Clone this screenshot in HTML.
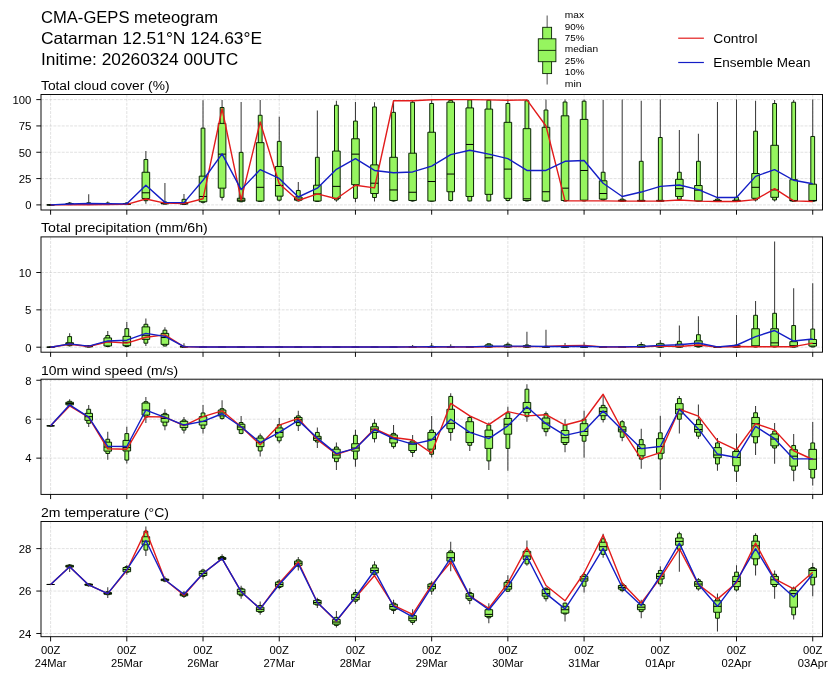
<!DOCTYPE html>
<html lang="en">
<head>
<meta charset="utf-8">
<title>CMA-GEPS meteogram</title>
<style>
html,body{margin:0;padding:0;background:#fff;}
body{width:840px;height:680px;overflow:hidden;font-family:"Liberation Sans",sans-serif;}
svg{display:block;will-change:transform;}
</style>
</head>
<body>
<svg width="840" height="680" viewBox="0 0 840 680" font-family="Liberation Sans, sans-serif">
<defs><clipPath id="c0"><rect x="41" y="94.5" width="781.5" height="115.5"/></clipPath><clipPath id="c1"><rect x="41" y="236.9" width="781.5" height="115.3"/></clipPath><clipPath id="c2"><rect x="41" y="379.2" width="781.5" height="115.2"/></clipPath><clipPath id="c3"><rect x="41" y="521.5" width="781.5" height="115.2"/></clipPath></defs>
<rect width="840" height="680" fill="#fff"/>
<text x="41" y="22.7" font-size="15.87" textLength="177" lengthAdjust="spacingAndGlyphs" fill="#000">CMA-GEPS meteogram</text>
<text x="41" y="43.6" font-size="15.87" textLength="221.12" lengthAdjust="spacingAndGlyphs" fill="#000">Catarman 12.51°N 124.63°E</text>
<text x="41" y="65" font-size="15.87" textLength="197.38" lengthAdjust="spacingAndGlyphs" fill="#000">Initime: 20260324 00UTC</text>
<line x1="547.15" y1="15.6" x2="547.15" y2="84.5" stroke="#606060" stroke-width="1.1"/>
<rect x="542.7" y="27.3" width="8.9" height="46.3" fill="#96f55f" stroke="#0a2405" stroke-width="0.9"/>
<rect x="538.3" y="38.8" width="17.6" height="22.9" fill="#96f55f" stroke="#0a2405" stroke-width="0.9"/>
<line x1="538.3" y1="50.4" x2="555.9" y2="50.4" stroke="#0a2405" stroke-width="0.9"/>
<text x="564.8" y="18.2" font-size="9.07" textLength="19.25" lengthAdjust="spacingAndGlyphs" fill="#000">max</text>
<text x="564.8" y="29.62" font-size="9.07" textLength="19.75" lengthAdjust="spacingAndGlyphs" fill="#000">90%</text>
<text x="564.8" y="41.04" font-size="9.07" textLength="19.75" lengthAdjust="spacingAndGlyphs" fill="#000">75%</text>
<text x="564.8" y="52.46" font-size="9.07" textLength="33.25" lengthAdjust="spacingAndGlyphs" fill="#000">median</text>
<text x="564.8" y="63.88" font-size="9.07" textLength="19.75" lengthAdjust="spacingAndGlyphs" fill="#000">25%</text>
<text x="564.8" y="75.3" font-size="9.07" textLength="19.75" lengthAdjust="spacingAndGlyphs" fill="#000">10%</text>
<text x="564.8" y="86.72" font-size="9.07" textLength="16.75" lengthAdjust="spacingAndGlyphs" fill="#000">min</text>
<line x1="678.2" y1="38.2" x2="703.9" y2="38.2" stroke="#e21c1c" stroke-width="1.2"/>
<line x1="678.2" y1="62.5" x2="703.9" y2="62.5" stroke="#141ec6" stroke-width="1.2"/>
<text x="713.2" y="42.8" font-size="12.47" textLength="44.38" lengthAdjust="spacingAndGlyphs" fill="#000">Control</text>
<text x="713.2" y="67.2" font-size="12.47" textLength="97.38" lengthAdjust="spacingAndGlyphs" fill="#000">Ensemble Mean</text>
<path d="M50.6 94.5V210M126.81 94.5V210M203.02 94.5V210M279.24 94.5V210M355.45 94.5V210M431.66 94.5V210M507.87 94.5V210M584.08 94.5V210M660.3 94.5V210M736.51 94.5V210M812.72 94.5V210M41 204.9H822.5M41 178.58H822.5M41 152.25H822.5M41 125.93H822.5M41 99.6H822.5" stroke="#c8c8c8" stroke-width="0.55" stroke-dasharray="2.9 1.25" fill="none"/>
<g clip-path="url(#c0)">
<path d="M69.65 201.95V204.69M88.71 194.26V204.69M107.76 201.53V204.69M126.81 202.27V204.69M145.87 150.88V203.85M164.92 182.89V204.37M183.97 194.05V204.58M203.02 100.13V203.53M222.08 99.92V200.48M241.13 102.02V202.27M260.18 99.92V201.74M279.24 116.66V201.43M298.29 182.05V201.43M317.34 110.55V201.74M336.4 100.76V201.74M355.45 102.02V202.27M374.5 102.23V201.43M393.55 100.76V201.43M412.61 99.92V201.43M431.66 99.6V201.43M450.71 99.6V201.43M469.77 99.6V201.43M488.82 99.6V201.43M507.87 99.6V201.43M526.93 99.6V201.43M545.98 99.6V201.43M565.03 99.6V201.43M584.08 99.6V201.43M603.14 99.92V201M622.19 99.6V201.43M641.24 100.76V201.43M660.3 99.6V201.43M679.35 129.93V200.48M698.4 133.82V201.43M717.46 102.02V201.43M736.51 99.6V201.43M755.56 100.76V201.43M774.61 99.92V201.43M793.67 99.92V201.43M812.72 99.6V201.43" stroke="#3c3c3c" stroke-width="1.05" fill="none"/>
<path d="M48.7 204.9H52.5V204.9H48.7ZM67.75 203H71.55V204.58H67.75ZM86.81 202.79H90.61V204.58H86.81ZM105.86 203H109.66V204.58H105.86ZM124.91 203H128.71V204.58H124.91ZM143.97 159.52H147.77V200.69H143.97ZM163.02 201.95H166.82V204.06H163.02ZM182.07 199.32H185.87V204.37H182.07ZM201.12 128.14H204.92V202.27H201.12ZM220.18 107.5H223.98V197.32H220.18ZM239.23 152.36H243.03V201.74H239.23ZM258.28 115.29H262.08V201.43H258.28ZM277.34 141.4H281.14V200.16H277.34ZM296.39 190.47H300.19V200.9H296.39ZM315.44 157.3H319.24V201.43H315.44ZM334.5 105.29H338.3V199.95H334.5ZM353.55 121.08H357.35V198.37H353.55ZM372.6 106.97H376.4V197.53H372.6ZM391.65 112.34H395.45V201H391.65ZM410.71 102.23H414.51V201H410.71ZM429.76 103.5H433.56V201.21H429.76ZM448.81 100.44H452.61V200.48H448.81ZM467.87 99.92H471.67V200.9H467.87ZM486.92 100.23H490.72V200.9H486.92ZM505.97 103.5H509.77V200.48H505.97ZM525.03 100.76H528.83V200.9H525.03ZM544.08 110.02H547.88V201.11H544.08ZM563.13 102.02H566.93V201H563.13ZM582.18 101.18H585.98V200.9H582.18ZM601.24 172.26H605.04V199.95H601.24ZM620.29 199.11H624.09V201.21H620.29ZM639.34 161.31H643.14V201.21H639.34ZM658.4 137.51H662.2V201.21H658.4ZM677.45 172.26H681.25V199.32H677.45ZM696.5 161.31H700.3V201.21H696.5ZM715.56 199.11H719.36V201.32H715.56ZM734.61 197.32H738.41V201.32H734.61ZM753.66 131.19H757.46V199.95H753.66ZM772.71 103.5H776.51V199.95H772.71ZM791.77 102.23H795.57V201.21H791.77ZM810.82 136.46H814.62V201.21H810.82Z" fill="#96f55f" stroke="#0a2405" stroke-width="1.0" stroke-linejoin="miter"/>
<path d="M46.8 204.9H54.4V204.9H46.8ZM65.85 203.64H73.45V204.37H65.85ZM84.91 203.64H92.51V204.37H84.91ZM103.96 203.64H111.56V204.37H103.96ZM123.01 203.64H130.61V204.37H123.01ZM142.06 172.26H149.67V198.48H142.06ZM161.12 202.79H168.72V203.85H161.12ZM180.17 202.79H187.77V204.06H180.17ZM199.22 176.15H206.82V201.74H199.22ZM218.28 123.4H225.88V188.16H218.28ZM237.33 198.27H244.93V201.21H237.33ZM256.38 142.67H263.98V201H256.38ZM275.44 166.47H283.04V196.16H275.44ZM294.49 197H302.09V200.16H294.49ZM313.54 185.21H321.14V201H313.54ZM332.6 151.09H340.2V198.37H332.6ZM351.65 138.77H359.25V184.68H351.65ZM370.7 164.89H378.3V193.53H370.7ZM389.75 157.3H397.35V200.48H389.75ZM408.81 153.2H416.41V200.48H408.81ZM427.86 132.24H435.46V201H427.86ZM446.91 102.23H454.51V191.74H446.91ZM465.97 107.92H473.57V196.48H465.97ZM485.02 109.08H492.62V194.37H485.02ZM504.07 122.34H511.67V198.37H504.07ZM523.13 128.66H530.73V200.48H523.13ZM542.18 127.29H549.78V200.9H542.18ZM561.23 115.82H568.83V200.48H561.23ZM580.28 119.4H587.88V200.16H580.28ZM599.34 180.79H606.94V199.11H599.34ZM618.39 200.16H625.99V201H618.39ZM637.44 200.37H645.04V201.11H637.44ZM656.5 200.37H664.1V201.11H656.5ZM675.55 179.31H683.15V196.48H675.55ZM694.6 185.52H702.2V200.9H694.6ZM713.66 200.37H721.25V201.21H713.66ZM732.71 200.16H740.31V201.21H732.71ZM751.76 173.52H759.36V198.27H751.76ZM770.81 145.3H778.41V197.32H770.81ZM789.87 179.73H797.47V200.9H789.87ZM808.92 184.16H816.52V200.9H808.92Z" fill="#96f55f" stroke="#0a2405" stroke-width="1.0" stroke-linejoin="miter"/>
<path d="M46.8 204.9H54.4M65.85 204.06H73.45M84.91 204.06H92.51M103.96 204.06H111.56M123.01 204.06H130.61M142.06 192.79H149.67M161.12 203.32H168.72M180.17 203.64H187.77M199.22 196.48H206.82M218.28 154.15H225.88M237.33 200.16H244.93M256.38 187.31H263.98M275.44 185.52H283.04M294.49 199.11H302.09M313.54 193.95H321.14M332.6 186.37H340.2M351.65 154.15H359.25M370.7 183.21H378.3M389.75 189.95H397.35M408.81 192.26H416.41M427.86 181.52H435.46M446.91 174.05H454.51M465.97 144.46H473.57M485.02 157.83H492.62M504.07 169.1H511.67M523.13 198.79H530.73M542.18 191.74H549.78M561.23 188.16H568.83M580.28 170.47H587.88M599.34 193.53H606.94M618.39 200.69H625.99M637.44 200.9H645.04M656.5 200.9H664.1M675.55 188.68H683.15M694.6 190.16H702.2M713.66 200.9H721.25M732.71 200.9H740.31M751.76 187.31H759.36M770.81 189.95H778.41M789.87 200.48H797.47M808.92 200.48H816.52" stroke="#000" stroke-width="1.0" fill="none"/>
<polyline points="50.6,204.9 69.65,204.58 88.71,204.79 107.76,204.48 126.81,204.37 145.87,199 164.92,203.11 183.97,203.64 203.02,198.79 222.08,108.76 241.13,199.95 260.18,122.03 279.24,183.73 298.29,200.48 317.34,193.84 336.4,198.79 355.45,185.21 374.5,187.84 393.55,100.76 412.61,100.76 431.66,99.81 450.71,99.6 469.77,99.6 488.82,99.92 507.87,100.23 526.93,99.92 545.98,126.03 565.03,200.9 584.08,200.9 603.14,200.9 622.19,201.11 641.24,201.11 660.3,201.11 679.35,199.95 698.4,201.11 717.46,201.43 736.51,201.43 755.56,199.64 774.61,188.68 793.67,200.9 812.72,201.43" fill="none" stroke="#e21c1c" stroke-width="1.4" stroke-linejoin="round"/>
<polyline points="50.6,204.9 69.65,203.95 88.71,203.53 107.76,203.74 126.81,203.85 145.87,185.21 164.92,202.37 183.97,202.58 203.02,180.26 222.08,153.83 241.13,189.63 260.18,169.62 279.24,178.47 298.29,197 317.34,188.16 336.4,169.31 355.45,158.67 374.5,170.47 393.55,172.78 412.61,171.94 431.66,166.15 450.71,154.67 469.77,150.25 488.82,154.15 507.87,158.67 526.93,170.47 545.98,170.47 565.03,161.31 584.08,160.46 603.14,183.21 622.19,196.48 641.24,192.05 660.3,186.37 679.35,185 698.4,189.63 717.46,197.53 736.51,197.53 755.56,176.36 774.61,169.62 793.67,180.26 812.72,183.73" fill="none" stroke="#141ec6" stroke-width="1.4" stroke-linejoin="round"/>
</g>
<rect x="41" y="94.5" width="781.5" height="115.5" fill="none" stroke="#000" stroke-width="0.95"/>
<path d="M50.6 210v4.7M126.81 210v4.7M203.02 210v4.7M279.24 210v4.7M355.45 210v4.7M431.66 210v4.7M507.87 210v4.7M584.08 210v4.7M660.3 210v4.7M736.51 210v4.7M812.72 210v4.7M41 204.9h-4.7M41 178.58h-4.7M41 152.25h-4.7M41 125.93h-4.7M41 99.6h-4.7" stroke="#000" stroke-width="0.95" fill="none"/>
<text x="31.4" y="209.2" font-size="10.2" textLength="6.25" lengthAdjust="spacingAndGlyphs" text-anchor="end" fill="#000">0</text>
<text x="31.4" y="182.88" font-size="10.2" textLength="12.75" lengthAdjust="spacingAndGlyphs" text-anchor="end" fill="#000">25</text>
<text x="31.4" y="156.55" font-size="10.2" textLength="12.62" lengthAdjust="spacingAndGlyphs" text-anchor="end" fill="#000">50</text>
<text x="31.4" y="130.23" font-size="10.2" textLength="12.75" lengthAdjust="spacingAndGlyphs" text-anchor="end" fill="#000">75</text>
<text x="31.4" y="103.9" font-size="10.2" textLength="18.88" lengthAdjust="spacingAndGlyphs" text-anchor="end" fill="#000">100</text>
<text x="41" y="89.9" font-size="12.47" textLength="128.5" lengthAdjust="spacingAndGlyphs" fill="#000">Total cloud cover (%)</text>
<path d="M50.6 236.9V352.2M126.81 236.9V352.2M203.02 236.9V352.2M279.24 236.9V352.2M355.45 236.9V352.2M431.66 236.9V352.2M507.87 236.9V352.2M584.08 236.9V352.2M660.3 236.9V352.2M736.51 236.9V352.2M812.72 236.9V352.2M41 347.2H822.5M41 309.85H822.5M41 272.5H822.5" stroke="#c8c8c8" stroke-width="0.55" stroke-dasharray="2.9 1.25" fill="none"/>
<g clip-path="url(#c1)">
<path d="M69.65 333.31V346.45M88.71 345.33V347.2M107.76 331.06V347.2M126.81 322.1V347.2M145.87 318.52V345.93M164.92 327.26V346.53M183.97 343.17V347.2M203.02 346.6V347.2M222.08 346.6V347.2M241.13 346.6V347.2M260.18 346.6V347.2M279.24 346.6V347.2M298.29 346.6V347.2M317.34 346.6V347.2M336.4 346.6V347.2M355.45 346.6V347.2M374.5 346.6V347.2M393.55 346.6V347.2M412.61 344.96V347.2M431.66 343.09V347.2M450.71 344.21V347.2M469.77 346.3V347.2M488.82 343.46V347.2M507.87 342.34V347.2M526.93 331.74V347.2M545.98 329.79V347.2M565.03 343.02V347.2M584.08 342.27V347.2M603.14 346.45V347.2M622.19 346.45V347.2M641.24 342.05V347.2M660.3 340.03V347.2M679.35 325.39V347.2M698.4 316.2V347.2M717.46 346.45V347.2M736.51 315.08V347.2M755.56 300.89V347.2M774.61 241.5V347.2M793.67 288.19V347.2M812.72 283.33V347.2" stroke="#3c3c3c" stroke-width="1.05" fill="none"/>
<path d="M48.7 347.2H52.5V347.2H48.7ZM67.75 336.59H71.55V345.71H67.75ZM86.81 345.71H90.61V347.05H86.81ZM105.86 335.47H109.66V346.53H105.86ZM124.91 328.67H128.71V346.53H124.91ZM143.97 324.27H147.77V343.17H143.97ZM163.02 330.17H166.82V345.93H163.02ZM182.07 346.3H185.87V347.13H182.07ZM201.12 346.9H204.92V347.2H201.12ZM220.18 346.9H223.98V347.2H220.18ZM239.23 346.9H243.03V347.2H239.23ZM258.28 346.9H262.08V347.2H258.28ZM277.34 346.9H281.14V347.2H277.34ZM296.39 346.9H300.19V347.2H296.39ZM315.44 346.9H319.24V347.2H315.44ZM334.5 346.9H338.3V347.2H334.5ZM353.55 346.9H357.35V347.2H353.55ZM372.6 346.9H376.4V347.2H372.6ZM391.65 346.9H395.45V347.2H391.65ZM410.71 346.45H414.51V347.2H410.71ZM429.76 346.08H433.56V347.2H429.76ZM448.81 346.45H452.61V347.2H448.81ZM467.87 346.6H471.67V347.2H467.87ZM486.92 343.84H490.72V347.2H486.92ZM505.97 344.21H509.77V347.2H505.97ZM525.03 344.96H528.83V347.2H525.03ZM544.08 346.3H547.88V347.2H544.08ZM563.13 346.08H566.93V347.2H563.13ZM582.18 345.71H585.98V347.2H582.18ZM601.24 346.75H605.04V347.2H601.24ZM620.29 346.75H624.09V347.2H620.29ZM639.34 344.51H643.14V347.2H639.34ZM658.4 343.32H662.2V347.2H658.4ZM677.45 341.37H681.25V347.2H677.45ZM696.5 334.73H700.3V347.05H696.5ZM715.56 346.75H719.36V347.2H715.56ZM734.61 344.96H738.41V347.2H734.61ZM753.66 315.3H757.46V347.05H753.66ZM772.71 313.29H776.51V346.98H772.71ZM791.77 325.54H795.57V347.13H791.77ZM810.82 329.05H814.62V346.98H810.82Z" fill="#96f55f" stroke="#0a2405" stroke-width="1.0" stroke-linejoin="miter"/>
<path d="M46.8 347.2H54.4V347.2H46.8ZM65.85 342.72H73.45V344.96H65.85ZM84.91 346.08H92.51V346.83H84.91ZM103.96 337.94H111.56V345.93H103.96ZM123.01 336.37H130.61V345.71H123.01ZM142.06 326.88H149.67V339.36H142.06ZM161.12 333.38H168.72V344.36H161.12ZM180.17 346.6H187.77V346.98H180.17ZM199.22 347.05H206.82V347.2H199.22ZM218.28 347.05H225.88V347.2H218.28ZM237.33 347.05H244.93V347.2H237.33ZM256.38 347.05H263.98V347.2H256.38ZM275.44 347.05H283.04V347.2H275.44ZM294.49 347.05H302.09V347.2H294.49ZM313.54 347.05H321.14V347.2H313.54ZM332.6 347.05H340.2V347.2H332.6ZM351.65 347.05H359.25V347.2H351.65ZM370.7 347.05H378.3V347.2H370.7ZM389.75 347.05H397.35V347.2H389.75ZM408.81 346.75H416.41V347.13H408.81ZM427.86 346.6H435.46V347.13H427.86ZM446.91 346.75H454.51V347.13H446.91ZM465.97 346.83H473.57V347.13H465.97ZM485.02 344.96H492.62V347.05H485.02ZM504.07 344.96H511.67V347.05H504.07ZM523.13 345.71H530.73V347.05H523.13ZM542.18 346.6H549.78V347.13H542.18ZM561.23 346.45H568.83V347.13H561.23ZM580.28 346.45H587.88V347.13H580.28ZM599.34 346.9H606.94V347.13H599.34ZM618.39 346.9H625.99V347.13H618.39ZM637.44 344.96H645.04V347.13H637.44ZM656.5 343.84H664.1V347.05H656.5ZM675.55 344.21H683.15V347.05H675.55ZM694.6 340.85H702.2V346.45H694.6ZM713.66 346.9H721.25V347.13H713.66ZM732.71 345.71H740.31V347.05H732.71ZM751.76 328.75H759.36V346.08H751.76ZM770.81 328.75H778.41V346.08H770.81ZM789.87 341.67H797.47V346.83H789.87ZM808.92 339.51H816.52V346.08H808.92Z" fill="#96f55f" stroke="#0a2405" stroke-width="1.0" stroke-linejoin="miter"/>
<path d="M46.8 347.2H54.4M65.85 343.84H73.45M84.91 346.45H92.51M103.96 341.75H111.56M123.01 342.34H130.61M142.06 335.25H149.67M161.12 337.56H168.72M180.17 346.83H187.77M199.22 347.13H206.82M218.28 347.13H225.88M237.33 347.13H244.93M256.38 347.13H263.98M275.44 347.13H283.04M294.49 347.13H302.09M313.54 347.13H321.14M332.6 347.13H340.2M351.65 347.13H359.25M370.7 347.13H378.3M389.75 347.13H397.35M408.81 346.98H416.41M427.86 346.98H435.46M446.91 346.98H454.51M465.97 347.05H473.57M485.02 346.6H492.62M504.07 346.45H511.67M523.13 346.6H530.73M542.18 346.9H549.78M561.23 346.9H568.83M580.28 346.9H587.88M599.34 347.05H606.94M618.39 347.05H625.99M637.44 346.83H645.04M656.5 346.45H664.1M675.55 346.45H683.15M694.6 343.69H702.2M713.66 347.05H721.25M732.71 346.6H740.31M751.76 346H759.36M770.81 342.87H778.41M789.87 345.71H797.47M808.92 343.46H816.52" stroke="#000" stroke-width="1.0" fill="none"/>
<polyline points="50.6,347.2 69.65,344.21 88.71,346.45 107.76,341.75 126.81,343.17 145.87,337.26 164.92,334.87 183.97,346.83 203.02,347.05 222.08,347.05 241.13,347.05 260.18,347.05 279.24,347.05 298.29,347.05 317.34,347.05 336.4,347.05 355.45,347.05 374.5,347.05 393.55,347.05 412.61,346.98 431.66,346.98 450.71,346.98 469.77,346.98 488.82,346.83 507.87,346.6 526.93,346.6 545.98,346.45 565.03,345.71 584.08,345.56 603.14,346.98 622.19,346.98 641.24,346.83 660.3,346.08 679.35,346.45 698.4,344.96 717.46,346.98 736.51,346.45 755.56,346.68 774.61,346.68 793.67,346.68 812.72,343.09" fill="none" stroke="#e21c1c" stroke-width="1.4" stroke-linejoin="round"/>
<polyline points="50.6,347.2 69.65,343.84 88.71,346.08 107.76,340.93 126.81,340.18 145.87,333.38 164.92,336.37 183.97,346.6 203.02,346.98 222.08,346.98 241.13,346.98 260.18,346.98 279.24,346.98 298.29,346.98 317.34,346.98 336.4,346.98 355.45,346.98 374.5,346.98 393.55,346.98 412.61,346.83 431.66,346.75 450.71,346.83 469.77,346.83 488.82,346.3 507.87,346.08 526.93,346.08 545.98,346.45 565.03,346.45 584.08,346.3 603.14,346.9 622.19,346.9 641.24,346.45 660.3,345.33 679.35,344.73 698.4,343.02 717.46,346.83 736.51,345.26 755.56,336.59 774.61,330.54 793.67,341.07 812.72,338.98" fill="none" stroke="#141ec6" stroke-width="1.4" stroke-linejoin="round"/>
</g>
<rect x="41" y="236.9" width="781.5" height="115.3" fill="none" stroke="#000" stroke-width="0.95"/>
<path d="M50.6 352.2v4.7M126.81 352.2v4.7M203.02 352.2v4.7M279.24 352.2v4.7M355.45 352.2v4.7M431.66 352.2v4.7M507.87 352.2v4.7M584.08 352.2v4.7M660.3 352.2v4.7M736.51 352.2v4.7M812.72 352.2v4.7M41 347.2h-4.7M41 309.85h-4.7M41 272.5h-4.7" stroke="#000" stroke-width="0.95" fill="none"/>
<text x="31.4" y="351.5" font-size="10.2" textLength="6.25" lengthAdjust="spacingAndGlyphs" text-anchor="end" fill="#000">0</text>
<text x="31.4" y="314.15" font-size="10.2" textLength="6.38" lengthAdjust="spacingAndGlyphs" text-anchor="end" fill="#000">5</text>
<text x="31.4" y="276.8" font-size="10.2" textLength="12.62" lengthAdjust="spacingAndGlyphs" text-anchor="end" fill="#000">10</text>
<text x="41" y="232.3" font-size="12.47" textLength="166.75" lengthAdjust="spacingAndGlyphs" fill="#000">Total precipitation (mm/6h)</text>
<path d="M50.6 379.2V494.4M126.81 379.2V494.4M203.02 379.2V494.4M279.24 379.2V494.4M355.45 379.2V494.4M431.66 379.2V494.4M507.87 379.2V494.4M584.08 379.2V494.4M660.3 379.2V494.4M736.51 379.2V494.4M812.72 379.2V494.4M41 458.14H822.5M41 419.2H822.5M41 380.26H822.5" stroke="#c8c8c8" stroke-width="0.55" stroke-dasharray="2.9 1.25" fill="none"/>
<g clip-path="url(#c2)">
<path d="M69.65 399.15V406.35M88.71 404.99V426.99M107.76 431.66V459.7M126.81 426.79V463.4M145.87 397V423.09M164.92 409.27V430.3M183.97 417.06V433.41M203.02 404.99V433.41M222.08 400.31V419.78M241.13 415.89V434.19M260.18 433.61V456.39M279.24 418.03V443.34M298.29 410.83V430.88M317.34 427.57V448.02M336.4 442.56V470.02M355.45 429.71V466.71M374.5 419.2V442.56M393.55 425.04V448.79M412.61 434.97V456.97M431.66 415.89V457.56M450.71 393.3V440.81M469.77 415.89V450.94M488.82 422.51V470.02M507.87 406.74V470.8M526.93 384.15V421.73M545.98 411.41V436.33M565.03 419.2V452.3M584.08 410.63V457.75M603.14 394.86V422.51M622.19 419.98V441.2M641.24 428.74V468.65M660.3 415.7V489.88M679.35 396.03V433.61M698.4 404.6V439.06M717.46 437.89V470.8M736.51 433.61V481.89M755.56 405.96V455.02M774.61 423.09V463.79M793.67 434V481.31M812.72 421.93V485.59" stroke="#3c3c3c" stroke-width="1.05" fill="none"/>
<path d="M48.7 425.82H52.5V425.82H48.7ZM67.75 401.29H71.55V405.38H67.75ZM86.81 409.27H90.61V423.29H86.81ZM105.86 439.25H109.66V453.47H105.86ZM124.91 433.61H128.71V460.09H124.91ZM143.97 401.68H147.77V417.06H143.97ZM163.02 413.36H166.82V425.82H163.02ZM182.07 419.98H185.87V430.1H182.07ZM201.12 412.97H204.92V428.35H201.12ZM220.18 408.69H223.98V418.42H220.18ZM239.23 422.51H243.03V433.41H239.23ZM258.28 435.94H262.08V450.94H258.28ZM277.34 424.65H281.14V440.81H277.34ZM296.39 415.89H300.19V425.63H296.39ZM315.44 432.44H319.24V441.98H315.44ZM334.5 447.04H338.3V461.64H334.5ZM353.55 435.36H357.35V459.11H353.55ZM372.6 423.29H376.4V438.67H372.6ZM391.65 433.41H395.45V446.65H391.65ZM410.71 440.81H414.51V452.49H410.71ZM429.76 430.1H433.56V454.25H429.76ZM448.81 396.42H452.61V432.44H448.81ZM467.87 417.45H471.67V445.29H467.87ZM486.92 425.04H490.72V460.87H486.92ZM505.97 412.97H509.77V448.4H505.97ZM525.03 389.22H528.83V416.67H525.03ZM544.08 413.75H547.88V431.66H544.08ZM563.13 425.04H566.93V444.51H563.13ZM582.18 419.2H585.98V441.2H582.18ZM601.24 405.38H605.04V419.59H601.24ZM620.29 421.73H624.09V437.31H620.29ZM639.34 439.64H643.14V459.11H639.34ZM658.4 432.83H662.2V458.92H658.4ZM677.45 398.56H681.25V419.2H677.45ZM696.5 419.78H700.3V436.14H696.5ZM715.56 442.95H719.36V463.98H715.56ZM734.61 449.77H738.41V471.18H734.61ZM753.66 412.77H757.46V442.95H753.66ZM772.71 431.08H776.51V448.02H772.71ZM791.77 445.48H795.57V470.21H791.77ZM810.82 442.95H814.62V478H810.82Z" fill="#96f55f" stroke="#0a2405" stroke-width="1.0" stroke-linejoin="miter"/>
<path d="M46.8 425.82H54.4V425.82H46.8ZM65.85 402.26H73.45V404.79H65.85ZM84.91 413.36H92.51V420.37H84.91ZM103.96 442.17H111.56V451.13H103.96ZM123.01 440.42H130.61V450.94H123.01ZM142.06 403.04H149.67V415.11H142.06ZM161.12 414.72H168.72V422.12H161.12ZM180.17 421.34H187.77V427.57H180.17ZM199.22 416.67H206.82V425.04H199.22ZM218.28 410.05H225.88V415.89H218.28ZM237.33 424.26H244.93V429.71H237.33ZM256.38 438.09H263.98V446.65H256.38ZM275.44 427.96H283.04V437.11H275.44ZM294.49 417.45H302.09V422.51H294.49ZM313.54 436.33H321.14V440.42H313.54ZM332.6 449.18H340.2V458.14H332.6ZM351.65 443.73H359.25V451.13H351.65ZM370.7 426.79H378.3V432.44H370.7ZM389.75 434.97H397.35V442.95H389.75ZM408.81 442.17H416.41V450.55H408.81ZM427.86 432.44H435.46V449.18H427.86ZM446.91 409.27H454.51V428.74H446.91ZM465.97 421.73H473.57V442.56H465.97ZM485.02 430.1H492.62V448.4H485.02ZM504.07 418.42H511.67V434.19H504.07ZM523.13 402.46H530.73V412.58H523.13ZM542.18 418.03H549.78V428.74H542.18ZM561.23 430.49H568.83V442.56H561.23ZM580.28 423.68H587.88V435.55H580.28ZM599.34 407.71H606.94V415.7H599.34ZM618.39 426.79H625.99V431.86H618.39ZM637.44 444.71H645.04V455.8H637.44ZM656.5 438.67H664.1V453.27H656.5ZM675.55 403.62H683.15V413.94H675.55ZM694.6 424.46H702.2V432.24H694.6ZM713.66 447.63H721.25V457.75H713.66ZM732.71 451.52H740.31V465.73H732.71ZM751.76 417.45H759.36V436.72H751.76ZM770.81 434H778.41V445.87H770.81ZM789.87 449.77H797.47V466.12H789.87ZM808.92 449.38H816.52V469.43H808.92Z" fill="#96f55f" stroke="#0a2405" stroke-width="1.0" stroke-linejoin="miter"/>
<path d="M46.8 425.82H54.4M65.85 403.43H73.45M84.91 416.67H92.51M103.96 447.04H111.56M123.01 447.63H130.61M142.06 410.05H149.67M161.12 418.42H168.72M180.17 424.65H187.77M199.22 421.34H206.82M218.28 412.97H225.88M237.33 426.99H244.93M256.38 442.56H263.98M275.44 432.44H283.04M294.49 419.78H302.09M313.54 438.28H321.14M332.6 455.02H340.2M351.65 448.02H359.25M370.7 429.13H378.3M389.75 438.67H397.35M408.81 444.12H416.41M427.86 439.25H435.46M446.91 423.29H454.51M465.97 432.44H473.57M485.02 436.72H492.62M504.07 424.26H511.67M523.13 408.3H530.73M542.18 423.09H549.78M561.23 437.7H568.83M580.28 431.47H587.88M599.34 411.41H606.94M618.39 429.91H625.99M637.44 448.6H645.04M656.5 446.46H664.1M675.55 409.27H683.15M694.6 429.52H702.2M713.66 455.02H721.25M732.71 457.56H740.31M751.76 423.68H759.36M770.81 439.06H778.41M789.87 456.19H797.47M808.92 459.11H816.52" stroke="#000" stroke-width="1.0" fill="none"/>
<polyline points="50.6,425.82 69.65,405.96 88.71,417.45 107.76,448.79 126.81,449.18 145.87,416.67 164.92,417.06 183.97,425.63 203.02,416.67 222.08,410.83 241.13,426.79 260.18,444.71 279.24,425.04 298.29,418.42 317.34,439.64 336.4,454.25 355.45,448.4 374.5,428.74 393.55,437.5 412.61,440.03 431.66,453.08 450.71,403.43 469.77,415.89 488.82,424.65 507.87,411.61 526.93,415.89 545.98,414.72 565.03,425.04 584.08,419.98 603.14,394.28 622.19,429.91 641.24,458.92 660.3,452.69 679.35,409.27 698.4,416.08 717.46,440.81 736.51,449.77 755.56,423.68 774.61,430.1 793.67,450.74 812.72,459.5" fill="none" stroke="#e21c1c" stroke-width="1.4" stroke-linejoin="round"/>
<polyline points="50.6,425.82 69.65,404.79 88.71,417.06 107.76,446.26 126.81,446.46 145.87,410.05 164.92,417.45 183.97,425.04 203.02,421.34 222.08,413.75 241.13,426.79 260.18,442.56 279.24,432.44 298.29,420.37 317.34,438.09 336.4,453.66 355.45,448.4 374.5,429.71 393.55,438.67 412.61,444.12 431.66,440.03 450.71,419.2 469.77,432.44 488.82,438.67 507.87,425.82 526.93,406.74 545.98,423.68 565.03,435.36 584.08,431.08 603.14,411.02 622.19,429.91 641.24,448.6 660.3,446.46 679.35,409.27 698.4,428.94 717.46,454.05 736.51,457.56 755.56,426.4 774.61,438.67 793.67,458.92 812.72,458.92" fill="none" stroke="#141ec6" stroke-width="1.4" stroke-linejoin="round"/>
</g>
<rect x="41" y="379.2" width="781.5" height="115.2" fill="none" stroke="#000" stroke-width="0.95"/>
<path d="M50.6 494.4v4.7M126.81 494.4v4.7M203.02 494.4v4.7M279.24 494.4v4.7M355.45 494.4v4.7M431.66 494.4v4.7M507.87 494.4v4.7M584.08 494.4v4.7M660.3 494.4v4.7M736.51 494.4v4.7M812.72 494.4v4.7M41 458.14h-4.7M41 419.2h-4.7M41 380.26h-4.7" stroke="#000" stroke-width="0.95" fill="none"/>
<text x="31.4" y="462.44" font-size="10.2" textLength="6.25" lengthAdjust="spacingAndGlyphs" text-anchor="end" fill="#000">4</text>
<text x="31.4" y="423.5" font-size="10.2" textLength="6.38" lengthAdjust="spacingAndGlyphs" text-anchor="end" fill="#000">6</text>
<text x="31.4" y="384.56" font-size="10.2" textLength="6.25" lengthAdjust="spacingAndGlyphs" text-anchor="end" fill="#000">8</text>
<text x="41" y="374.6" font-size="12.47" textLength="137.12" lengthAdjust="spacingAndGlyphs" fill="#000">10m wind speed (m/s)</text>
<path d="M50.6 521.5V636.7M126.81 521.5V636.7M203.02 521.5V636.7M279.24 521.5V636.7M355.45 521.5V636.7M431.66 521.5V636.7M507.87 521.5V636.7M584.08 521.5V636.7M660.3 521.5V636.7M736.51 521.5V636.7M812.72 521.5V636.7M41 633.49H822.5M41 591.05H822.5M41 548.61H822.5" stroke="#c8c8c8" stroke-width="0.55" stroke-dasharray="2.9 1.25" fill="none"/>
<g clip-path="url(#c3)">
<path d="M69.65 563.89V571.95M88.71 583.2V586.81M107.76 587.23V598.05M126.81 564.95V574.71M145.87 526.54V556.04M164.92 576.41V582.14M183.97 591.05V598.05M203.02 568.77V579.38M222.08 554.34V560.49M241.13 585.75V598.69M260.18 601.45V614.82M279.24 578.95V589.14M298.29 557.1V570.47M317.34 597.84V608.03M336.4 611V627.55M355.45 589.14V603.78M374.5 561.13V575.98M393.55 599.75V613.97M412.61 609.3V625M431.66 581.08V594.66M450.71 541.82V571.32M469.77 588.29V604.21M488.82 603.15V623.3M507.87 575.35V591.69M526.93 540.55V565.8M545.98 587.23V601.45M565.03 602.51V621.61M584.08 572.16V592.54M603.14 533.76V557.73M622.19 582.14V592.32M641.24 599.75V618.21M660.3 566.22V586.59M679.35 531.63V571.74M698.4 578.11V590.63M717.46 593.38V631.58M736.51 565.37V591.69M755.56 533.33V575.56M774.61 570.47V598.69M793.67 586.59V619.48M812.72 562.83V596.14" stroke="#3c3c3c" stroke-width="1.05" fill="none"/>
<path d="M48.7 584.47H52.5V584.47H48.7ZM67.75 564.95H71.55V567.5H67.75ZM86.81 583.84H90.61V585.75H86.81ZM105.86 591.69H109.66V594.66H105.86ZM124.91 566.65H128.71V572.16H124.91ZM143.97 531.21H147.77V550.1H143.97ZM163.02 578.74H166.82V581.08H163.02ZM182.07 592.96H185.87V596.35H182.07ZM201.12 570.04H204.92V576.41H201.12ZM220.18 556.46H223.98V559.86H220.18ZM239.23 588.29H243.03V595.72H239.23ZM258.28 605.48H262.08V612.27H258.28ZM277.34 581.08H281.14V587.44H277.34ZM296.39 559.86H300.19V566.22H296.39ZM315.44 599.54H319.24V605.06H315.44ZM334.5 617.36H338.3V625.43H334.5ZM353.55 592.54H357.35V601.24H353.55ZM372.6 564.95H376.4V574.71H372.6ZM391.65 603.15H395.45V610.57H391.65ZM410.71 614.39H414.51V622.46H410.71ZM429.76 583.2H433.56V591.05H429.76ZM448.81 550.94H452.61V561.98H448.81ZM467.87 592.54H471.67V600.39H467.87ZM486.92 608.24H490.72V617.79H486.92ZM505.97 580.65H509.77V591.26H505.97ZM525.03 549.67H528.83V563.89H525.03ZM544.08 588.29H547.88V598.69H544.08ZM563.13 603.15H566.93V613.97H563.13ZM582.18 574.71H585.98V586.17H582.18ZM601.24 538.85H605.04V554.34H601.24ZM620.29 584.05H624.09V590.63H620.29ZM639.34 602.51H643.14V611.63H639.34ZM658.4 570.47H662.2V583.84H658.4ZM677.45 533.76H681.25V549.25H677.45ZM696.5 579.8H700.3V588.93H696.5ZM715.56 598.69H719.36V618.21H715.56ZM734.61 572.16H738.41V589.99H734.61ZM753.66 535.45H757.46V564.95H753.66ZM772.71 574.29H776.51V586.59H772.71ZM791.77 588.29H795.57V614.82H791.77ZM810.82 567.5H814.62V584.9H810.82Z" fill="#96f55f" stroke="#0a2405" stroke-width="1.0" stroke-linejoin="miter"/>
<path d="M46.8 584.47H54.4V584.47H46.8ZM65.85 565.37H73.45V567.07H65.85ZM84.91 584.05H92.51V585.32H84.91ZM103.96 592.54H111.56V594.23H103.96ZM123.01 567.5H130.61V571.74H123.01ZM142.06 536.73H149.67V544.79H142.06ZM161.12 579.17H168.72V580.65H161.12ZM180.17 593.6H187.77V595.72H180.17ZM199.22 571.32H206.82V575.56H199.22ZM218.28 557.52H225.88V559.43H218.28ZM237.33 589.14H244.93V594.23H237.33ZM256.38 607.18H263.98V611.42H256.38ZM275.44 582.14H283.04V586.59H275.44ZM294.49 561.13H302.09V565.37H294.49ZM313.54 600.39H321.14V604.21H313.54ZM332.6 619.48H340.2V624.15H332.6ZM351.65 594.23H359.25V599.75H351.65ZM370.7 567.92H378.3V573.01H370.7ZM389.75 604.21H397.35V609.3H389.75ZM408.81 615.67H416.41V620.76H408.81ZM427.86 584.05H435.46V588.93H427.86ZM446.91 552.64H454.51V561.13H446.91ZM465.97 593.6H473.57V598.69H465.97ZM485.02 609.72H492.62V616.51H485.02ZM504.07 582.35H511.67V589.14H504.07ZM523.13 551.37H530.73V559.43H523.13ZM542.18 589.56H549.78V596.14H542.18ZM561.23 606.33H568.83V613.12H561.23ZM580.28 576.41H587.88V581.08H580.28ZM599.34 542.24H606.94V550.31H599.34ZM618.39 585.53H625.99V589.14H618.39ZM637.44 604.63H645.04V609.72H637.44ZM656.5 573.44H664.1V578.95H656.5ZM675.55 538H683.15V545.21H675.55ZM694.6 581.5H702.2V586.38H694.6ZM713.66 600.81H721.25V612.27H713.66ZM732.71 576.41H740.31V586.59H732.71ZM751.76 541.18H759.36V558.8H751.76ZM770.81 576.41H778.41V584.47H770.81ZM789.87 590.63H797.47V607.18H789.87ZM808.92 568.77H816.52V577.26H808.92Z" fill="#96f55f" stroke="#0a2405" stroke-width="1.0" stroke-linejoin="miter"/>
<path d="M46.8 584.47H54.4M65.85 566.22H73.45M84.91 584.68H92.51M103.96 593.6H111.56M123.01 569.62H130.61M142.06 541.18H149.67M161.12 579.8H168.72M180.17 594.66H187.77M199.22 573.44H206.82M218.28 558.58H225.88M237.33 591.69H244.93M256.38 609.3H263.98M275.44 584.47H283.04M294.49 563.25H302.09M313.54 602.51H321.14M332.6 622.03H340.2M351.65 597.42H359.25M370.7 570.47H378.3M389.75 606.54H397.35M408.81 618.21H416.41M427.86 586.38H435.46M446.91 557.73H454.51M465.97 596.14H473.57M485.02 614.39H492.62M504.07 586.59H511.67M523.13 556.04H530.73M542.18 593.6H549.78M561.23 609.72H568.83M580.28 578.95H587.88M599.34 546.7H606.94M618.39 587.44H625.99M637.44 607.18H645.04M656.5 576.41H664.1M675.55 541.4H683.15M694.6 584.05H702.2M713.66 606.33H721.25M732.71 581.5H740.31M751.76 545.85H759.36M770.81 579.8H778.41M789.87 593.6H797.47M808.92 570.47H816.52" stroke="#000" stroke-width="1.0" fill="none"/>
<polyline points="50.6,584.47 69.65,566.65 88.71,584.9 107.76,593.6 126.81,570.47 145.87,530.36 164.92,579.8 183.97,595.29 203.02,573.44 222.08,558.58 241.13,591.69 260.18,608.87 279.24,583.2 298.29,561.98 317.34,602.51 336.4,621.18 355.45,597.42 374.5,575.56 393.55,605.48 412.61,614.39 431.66,584.9 450.71,561.98 469.77,596.14 488.82,608.24 507.87,583.2 526.93,547.55 545.98,585.53 565.03,600.81 584.08,573.01 603.14,535.03 622.19,583.2 641.24,602.93 660.3,578.11 679.35,548.61 698.4,584.47 717.46,599.11 736.51,582.77 755.56,543.09 774.61,578.95 793.67,588.93 812.72,572.16" fill="none" stroke="#e21c1c" stroke-width="1.4" stroke-linejoin="round"/>
<polyline points="50.6,584.47 69.65,566.65 88.71,584.9 107.76,593.6 126.81,569.62 145.87,540.55 164.92,579.8 183.97,594.23 203.02,573.44 222.08,558.58 241.13,591.69 260.18,608.87 279.24,584.47 298.29,563.68 317.34,602.51 336.4,620.76 355.45,596.99 374.5,570.47 393.55,606.33 412.61,616.94 431.66,586.81 450.71,558.16 469.77,596.14 488.82,609.72 507.87,586.59 526.93,556.46 545.98,593.6 565.03,608.87 584.08,579.8 603.14,548.4 622.19,587.44 641.24,605.48 660.3,575.98 679.35,543.09 698.4,584.26 717.46,606.33 736.51,581.08 755.56,548.61 774.61,579.8 793.67,596.99 812.72,574.29" fill="none" stroke="#141ec6" stroke-width="1.4" stroke-linejoin="round"/>
</g>
<rect x="41" y="521.5" width="781.5" height="115.2" fill="none" stroke="#000" stroke-width="0.95"/>
<path d="M50.6 636.7v4.7M126.81 636.7v4.7M203.02 636.7v4.7M279.24 636.7v4.7M355.45 636.7v4.7M431.66 636.7v4.7M507.87 636.7v4.7M584.08 636.7v4.7M660.3 636.7v4.7M736.51 636.7v4.7M812.72 636.7v4.7M41 633.49h-4.7M41 591.05h-4.7M41 548.61h-4.7" stroke="#000" stroke-width="0.95" fill="none"/>
<text x="31.4" y="637.79" font-size="10.2" textLength="12.62" lengthAdjust="spacingAndGlyphs" text-anchor="end" fill="#000">24</text>
<text x="31.4" y="595.35" font-size="10.2" textLength="12.75" lengthAdjust="spacingAndGlyphs" text-anchor="end" fill="#000">26</text>
<text x="31.4" y="552.91" font-size="10.2" textLength="12.62" lengthAdjust="spacingAndGlyphs" text-anchor="end" fill="#000">28</text>
<text x="41" y="516.9" font-size="12.47" textLength="128" lengthAdjust="spacingAndGlyphs" fill="#000">2m temperature (°C)</text>
<text x="50.6" y="654.4" font-size="10.2" textLength="19.38" lengthAdjust="spacingAndGlyphs" text-anchor="middle" fill="#000">00Z</text>
<text x="50.6" y="666.6" font-size="10.2" textLength="31.5" lengthAdjust="spacingAndGlyphs" text-anchor="middle" fill="#000">24Mar</text>
<text x="126.81" y="654.4" font-size="10.2" textLength="19.38" lengthAdjust="spacingAndGlyphs" text-anchor="middle" fill="#000">00Z</text>
<text x="126.81" y="666.6" font-size="10.2" textLength="31.62" lengthAdjust="spacingAndGlyphs" text-anchor="middle" fill="#000">25Mar</text>
<text x="203.02" y="654.4" font-size="10.2" textLength="19.38" lengthAdjust="spacingAndGlyphs" text-anchor="middle" fill="#000">00Z</text>
<text x="203.02" y="666.6" font-size="10.2" textLength="31.62" lengthAdjust="spacingAndGlyphs" text-anchor="middle" fill="#000">26Mar</text>
<text x="279.24" y="654.4" font-size="10.2" textLength="19.38" lengthAdjust="spacingAndGlyphs" text-anchor="middle" fill="#000">00Z</text>
<text x="279.24" y="666.6" font-size="10.2" textLength="31.62" lengthAdjust="spacingAndGlyphs" text-anchor="middle" fill="#000">27Mar</text>
<text x="355.45" y="654.4" font-size="10.2" textLength="19.38" lengthAdjust="spacingAndGlyphs" text-anchor="middle" fill="#000">00Z</text>
<text x="355.45" y="666.6" font-size="10.2" textLength="31.5" lengthAdjust="spacingAndGlyphs" text-anchor="middle" fill="#000">28Mar</text>
<text x="431.66" y="654.4" font-size="10.2" textLength="19.38" lengthAdjust="spacingAndGlyphs" text-anchor="middle" fill="#000">00Z</text>
<text x="431.66" y="666.6" font-size="10.2" textLength="31.62" lengthAdjust="spacingAndGlyphs" text-anchor="middle" fill="#000">29Mar</text>
<text x="507.87" y="654.4" font-size="10.2" textLength="19.38" lengthAdjust="spacingAndGlyphs" text-anchor="middle" fill="#000">00Z</text>
<text x="507.87" y="666.6" font-size="10.2" textLength="31.38" lengthAdjust="spacingAndGlyphs" text-anchor="middle" fill="#000">30Mar</text>
<text x="584.08" y="654.4" font-size="10.2" textLength="19.38" lengthAdjust="spacingAndGlyphs" text-anchor="middle" fill="#000">00Z</text>
<text x="584.08" y="666.6" font-size="10.2" textLength="31.5" lengthAdjust="spacingAndGlyphs" text-anchor="middle" fill="#000">31Mar</text>
<text x="660.3" y="654.4" font-size="10.2" textLength="19.38" lengthAdjust="spacingAndGlyphs" text-anchor="middle" fill="#000">00Z</text>
<text x="660.3" y="666.6" font-size="10.2" textLength="29.88" lengthAdjust="spacingAndGlyphs" text-anchor="middle" fill="#000">01Apr</text>
<text x="736.51" y="654.4" font-size="10.2" textLength="19.38" lengthAdjust="spacingAndGlyphs" text-anchor="middle" fill="#000">00Z</text>
<text x="736.51" y="666.6" font-size="10.2" textLength="29.88" lengthAdjust="spacingAndGlyphs" text-anchor="middle" fill="#000">02Apr</text>
<text x="812.72" y="654.4" font-size="10.2" textLength="19.38" lengthAdjust="spacingAndGlyphs" text-anchor="middle" fill="#000">00Z</text>
<text x="812.72" y="666.6" font-size="10.2" textLength="29.75" lengthAdjust="spacingAndGlyphs" text-anchor="middle" fill="#000">03Apr</text>
</svg>
</body>
</html>
